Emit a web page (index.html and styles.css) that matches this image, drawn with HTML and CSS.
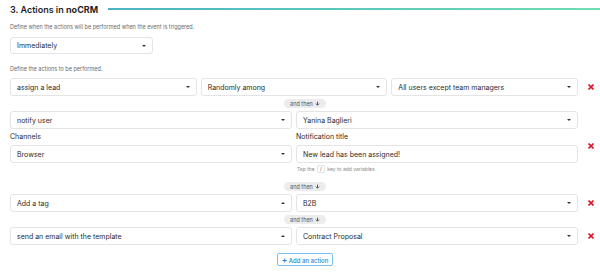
FILE: index.html
```html
<!DOCTYPE html>
<html lang="en">
<head>
    <meta charset="UTF-8">
    <meta name="viewport" content="width=device-width, initial-scale=1.0">
    <title>Actions in noCRM</title>
    <link rel="stylesheet" href="styles.css">
</head>
<body>
    <div class="panel">
        <div class="section-head">
            <h2><span class="title-num">3. Actions in</span> <b>noCRM</b></h2>
            <span class="rule"></span>
        </div>

        <p class="hint">Define when the actions will be performed when the event is triggered.</p>
        <div class="select timing"><span>Immediately</span><i class="caret"></i></div>

        <p class="hint hint-actions">Define the actions to be performed.</p>

        <div class="actions">
            <!-- assign -->
            <div class="action-row cols-3">
                <div class="select"><span>assign a lead</span><i class="caret"></i></div>
                <div class="select"><span>Randomly among</span><i class="caret"></i></div>
                <div class="select"><span>All users except team managers</span><i class="caret"></i></div>
                <button class="remove" title="Remove"><svg viewBox="0 0 8 8" width="6" height="6"><path d="M1.5 1.5 L6.5 6.5 M6.5 1.5 L1.5 6.5" /></svg></button>
            </div>
            <div class="connector"><span class="pill">and then <svg viewBox="0 0 8 8" width="5" height="5"><path d="M4 1 V6.5 M1.5 4.2 L4 6.7 L6.5 4.2" /></svg></span></div>

            <!-- notify -->
            <div class="action-row">
                <div class="select"><span>notify user</span><i class="caret"></i></div>
                <div class="select"><span>Yanina Baglieri</span><i class="caret"></i></div>
            </div>
            <div class="action-row labelled">
                <label class="field-label c1">Channels</label>
                <label class="field-label c2">Notification title</label>
                <div class="select c1"><span>Browser</span><i class="caret"></i></div>
                <div class="text-input c2">New lead has been assigned!</div>
                <button class="remove" title="Remove"><svg viewBox="0 0 8 8" width="6" height="6"><path d="M1.5 1.5 L6.5 6.5 M6.5 1.5 L1.5 6.5" /></svg></button>
                <p class="tip c2">Tap the <kbd>/</kbd> key to add variables</p>
            </div>
            <div class="connector"><span class="pill">and then <svg viewBox="0 0 8 8" width="5" height="5"><path d="M4 1 V6.5 M1.5 4.2 L4 6.7 L6.5 4.2" /></svg></span></div>

            <!-- tag -->
            <div class="action-row">
                <div class="select"><span>Add a tag</span><i class="caret up"></i></div>
                <div class="select"><span>B2B</span><i class="caret"></i></div>
                <button class="remove" title="Remove"><svg viewBox="0 0 8 8" width="6" height="6"><path d="M1.5 1.5 L6.5 6.5 M6.5 1.5 L1.5 6.5" /></svg></button>
            </div>
            <div class="connector"><span class="pill">and then <svg viewBox="0 0 8 8" width="5" height="5"><path d="M4 1 V6.5 M1.5 4.2 L4 6.7 L6.5 4.2" /></svg></span></div>

            <!-- email -->
            <div class="action-row">
                <div class="select"><span>send an email with the template</span><i class="caret up"></i></div>
                <div class="select"><span>Contract Proposal</span><i class="caret"></i></div>
                <button class="remove" title="Remove"><svg viewBox="0 0 8 8" width="6" height="6"><path d="M1.5 1.5 L6.5 6.5 M6.5 1.5 L1.5 6.5" /></svg></button>
            </div>
        </div>

        <div class="add-row">
            <button class="add-btn"><b>+</b> Add an action</button>
        </div>
    </div>
</body>
</html>
```

FILE: styles.css
```css
body { margin: 0; font-family: Inter, "Noto Sans", sans-serif; color: #333; background: #fff; }
p { margin: 0; }

.panel {
    padding: 3px 0 0 10px;
}

/* Section heading with the teal rule */
.section-head {
    display: flex;
    align-items: center;
    gap: 10px;
    height: 12px;
}
.section-head h2 {
    margin: 0;
    font-size: 9px;
    font-weight: 600;
    color: #1f1f1f;
    white-space: nowrap;
}
.section-head h2 b { font-weight: 700; }
.rule {
    flex: 1;
    height: 1.5px;
    background: linear-gradient(to right, #4db3c2, #6fdcb2);
}

.hint {
    margin-top: 8px;
    font-size: 5.5px;
    line-height: 8px;
    color: #6b6b6b;
}
.hint-actions { margin-top: 11px; }

/* Fake select boxes */
.select,
.text-input {
    box-sizing: border-box;
    height: 18px;
    display: flex;
    align-items: center;
    justify-content: space-between;
    padding: 0 6px;
    border: 1px solid #e4e4e4;
    border-radius: 3px;
    background: #fff;
    font-size: 7px;
    color: #2b2b2b;
    white-space: nowrap;
}
.timing {
    width: 143px;
    height: 17px;
    margin-top: 6px;
}
.caret {
    width: 0;
    height: 0;
    border-left: 2px solid transparent;
    border-right: 2px solid transparent;
    border-top: 2px solid #333;
}
.caret.up {
    border-top: 0;
    border-bottom: 2px solid #333;
}

.actions { margin-top: 5px; }

.action-row {
    display: grid;
    grid-template-columns: 1fr 1fr 18px;
    column-gap: 4px;
    align-items: center;
}
.action-row.cols-3 { grid-template-columns: 1fr 1fr 1fr 18px; }

.labelled { grid-template-rows: auto 18px auto; }
.labelled .c1 { grid-column: 1; }
.labelled .c2 { grid-column: 2; }
.labelled .remove { grid-column: 3; grid-row: 1 / 3; }
.field-label {
    padding: 3px 0 3px;
    font-size: 7px;
    line-height: 10px;
    color: #2b2b2b;
}
.tip {
    margin: 2px 0 6px;
    padding-left: 1px;
    font-size: 5px;
    line-height: 8px;
    color: #8a8a8a;
}
.tip kbd {
    display: inline-block;
    padding: 0 2px;
    margin: 0 1px;
    border: 1px solid #e2e2e2;
    border-radius: 2px;
    font-family: inherit;
    font-size: 5px;
    line-height: 6px;
    color: #555;
}

.remove {
    border: 0;
    padding: 0;
    background: none;
    display: flex;
    justify-content: center;
    align-items: center;
}
.remove svg { stroke: #e0182d; stroke-width: 2.2; stroke-linecap: square; fill: none; }

/* "and then" connector */
.connector {
    display: flex;
    justify-content: center;
    padding: 3px 0;
}
.pill {
    display: inline-flex;
    align-items: center;
    gap: 2px;
    height: 9px;
    padding: 0 6px;
    border-radius: 5px;
    background: #ececec;
    font-size: 5.5px;
    color: #555;
}
.pill svg { stroke: #555; stroke-width: 1.6; fill: none; }

.add-row {
    display: flex;
    justify-content: center;
    margin-top: 8px;
}
.add-btn {
    height: 13px;
    padding: 0 4px;
    border: 1px solid #7cc0ef;
    border-radius: 2px;
    background: #fff;
    font-family: inherit;
    font-size: 6px;
    font-weight: 500;
    color: #1b84d4;
}
.add-btn b { font-size: 8px; font-weight: 700; }
```
